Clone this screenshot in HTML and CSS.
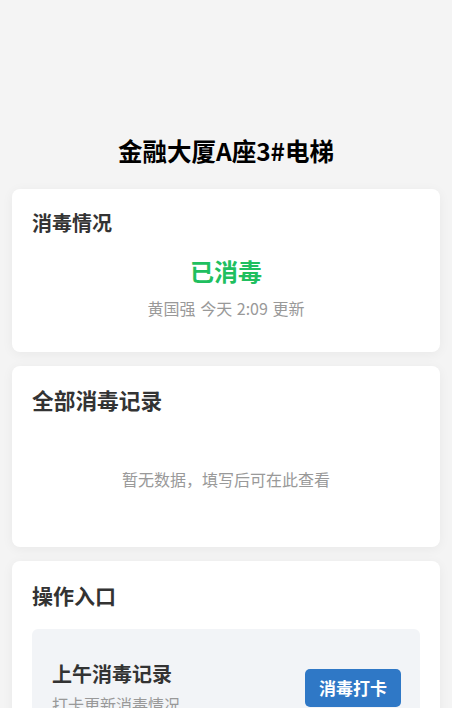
FILE: index.html
```html
<!DOCTYPE html>
<html lang="zh">
<head>
<meta charset="utf-8">
<link rel="stylesheet" href="styles.css">
</head>
<body>
<div class="page">
  <h1 class="title">金融大厦A座3#电梯</h1>
  <section class="card status-card">
    <h2 class="card-title">消毒情况</h2>
    <div class="status">已消毒</div>
    <div class="status-meta">黄国强 今天 2:09 更新</div>
  </section>
  <section class="card">
    <h2 class="card-title xl">全部消毒记录</h2>
    <div class="empty">暂无数据，填写后可在此查看</div>
  </section>
  <section class="card">
    <h2 class="card-title lg">操作入口</h2>
    <div class="entry">
      <div class="entry-text">
        <div class="entry-title">上午消毒记录</div>
        <div class="entry-sub">打卡更新消毒情况</div>
      </div>
      <button class="btn">消毒打卡</button>
    </div>
  </section>
</div>
</body>
</html>
```
FILE: styles.css
```css
* { box-sizing: border-box; }
html, body {
  margin: 0;
  padding: 0;
  background: #f4f4f4;
  font-family: "Noto Sans CJK SC", "Noto Sans", sans-serif;
  color: #333;
}
.page {
  padding: 134px 12px 0;
  display: flex;
  flex-direction: column;
  gap: 14px;
}
.title {
  margin: 0 0 7px;
  text-align: center;
  font-size: 24.5px;
  line-height: 34px;
  font-weight: 700;
  color: #000;
}
.card {
  background: #fff;
  border-radius: 8px;
  padding: 20px;
  box-shadow: 0 2px 12px rgba(0, 0, 0, 0.05);
}
.card-title {
  margin: 0;
  font-size: 20px;
  line-height: 28px;
  font-weight: 700;
  color: #333;
}
.card-title.lg { font-size: 21px; }
.card-title.xl { font-size: 21.7px; }
.status {
  margin-top: 18px;
  text-align: center;
  font-size: 24px;
  line-height: 32px;
  font-weight: 700;
  color: #20bf5f;
}
.status-meta {
  margin-top: 9px;
  margin-bottom: 12px;
  text-align: center;
  font-size: 16px;
  line-height: 24px;
  color: #999;
  word-spacing: 1px;
}
.empty {
  padding: 53px 0 36px;
  text-align: center;
  font-size: 16px;
  line-height: 24px;
  color: #999;
}
.entry {
  margin-top: 20px;
  background: #f2f4f7;
  border-radius: 6px;
  padding: 31px 19px 20px 20px;
  display: flex;
  align-items: center;
  justify-content: space-between;
}
.entry-title {
  font-size: 20px;
  line-height: 28px;
  font-weight: 700;
  color: #333;
}
.entry-sub {
  margin-top: 4px;
  font-size: 16px;
  line-height: 24px;
  color: #999;
}
.btn {
  border: 0;
  background: #2f78c6;
  color: #fff;
  font-family: inherit;
  font-size: 17px;
  font-weight: 700;
  line-height: 38px;
  height: 38px;
  padding: 0 14px;
  border-radius: 5px;
}
```
